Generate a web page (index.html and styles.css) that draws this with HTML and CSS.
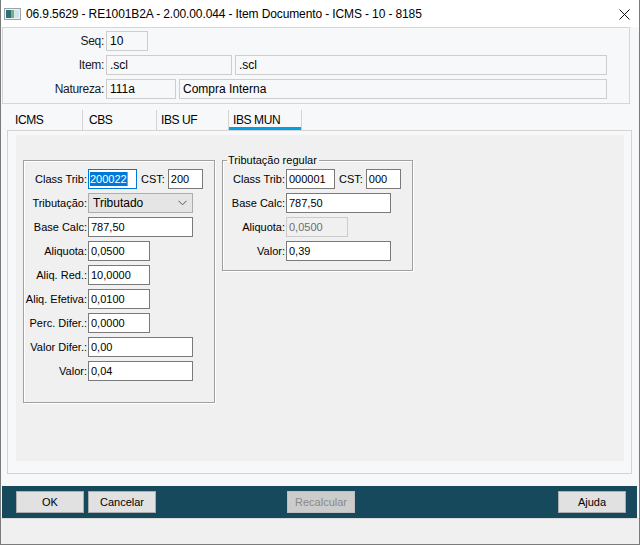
FILE: index.html
```html
<!DOCTYPE html>
<html lang="pt-BR">
<head>
    <meta charset="UTF-8">
    <meta name="viewport" content="width=device-width, initial-scale=1.0">
    <title>Item Documento - ICMS</title>
    <link rel="stylesheet" href="styles.css">
</head>
<body>
    <div class="window">
        <div class="titlebar">
            <svg class="app-icon" width="17" height="12" viewBox="0 0 17 12">
                <rect x="0.5" y="0.5" width="16" height="11" fill="#eef3f6" stroke="#9aa3a8"/>
                <rect x="2" y="2" width="5" height="8" fill="#2f6d7e"/>
                <rect x="7" y="2" width="3" height="8" fill="#6fb86a"/>
                <rect x="10" y="2" width="5" height="8" fill="#d3e3ee"/>
            </svg>
            <span class="title">06.9.5629 - RE1001B2A - 2.00.00.044 - Item Documento - ICMS - 10 - 8185</span>
            <svg class="close" width="11" height="11" viewBox="0 0 11 11">
                <path d="M0.5 0.5 L10.5 10.5 M10.5 0.5 L0.5 10.5" stroke="#111" stroke-width="1" fill="none"/>
            </svg>
        </div>

        <div class="header">
            <div class="hrow">
                <label>Seq:</label>
                <div class="hfields">
                    <div class="hinput w-seq">10</div>
                </div>
            </div>
            <div class="hrow">
                <label>Item:</label>
                <div class="hfields">
                    <div class="hinput w-item">.scl</div>
                    <div class="hinput w-item-desc">.scl</div>
                </div>
            </div>
            <div class="hrow">
                <label>Natureza:</label>
                <div class="hfields">
                    <div class="hinput w-nat">111a</div>
                    <div class="hinput w-nat-desc">Compra Interna</div>
                </div>
            </div>
        </div>

        <div class="tabs">
            <div class="tab t1">ICMS</div>
            <div class="tab t2">CBS</div>
            <div class="tab t3">IBS UF</div>
            <div class="tab t4 active">IBS MUN</div>
        </div>

        <div class="tab-panel">
            <div class="panel-inner">
                <fieldset class="group group-left">
                    <div class="frow">
                        <label>Class Trib:</label>
                        <div class="finput w-code focused"><span class="sel">200022</span><span class="caret"></span></div>
                        <span class="cst">CST:</span>
                        <div class="finput w-cst">200</div>
                    </div>
                    <div class="frow">
                        <label>Tributação:</label>
                        <div class="select w-long">
                            <span>Tributado</span>
                            <svg width="9" height="6" viewBox="0 0 9 6">
                                <path d="M0.5 0.8 L4.5 4.8 L8.5 0.8" stroke="#555" stroke-width="1" fill="none"/>
                            </svg>
                        </div>
                    </div>
                    <div class="frow">
                        <label>Base Calc:</label>
                        <div class="finput w-long">787,50</div>
                    </div>
                    <div class="frow">
                        <label>Aliquota:</label>
                        <div class="finput w-rate">0,0500</div>
                    </div>
                    <div class="frow">
                        <label>Aliq. Red.:</label>
                        <div class="finput w-rate">10,0000</div>
                    </div>
                    <div class="frow">
                        <label>Aliq. Efetiva:</label>
                        <div class="finput w-rate">0,0100</div>
                    </div>
                    <div class="frow">
                        <label>Perc. Difer.:</label>
                        <div class="finput w-rate">0,0000</div>
                    </div>
                    <div class="frow">
                        <label>Valor Difer.:</label>
                        <div class="finput w-long">0,00</div>
                    </div>
                    <div class="frow">
                        <label>Valor:</label>
                        <div class="finput w-long">0,04</div>
                    </div>
                </fieldset>

                <fieldset class="group group-right">
                    <legend>Tributação regular</legend>
                    <div class="frow">
                        <label>Class Trib:</label>
                        <div class="finput w-code">000001</div>
                        <span class="cst">CST:</span>
                        <div class="finput w-cst">000</div>
                    </div>
                    <div class="frow">
                        <label>Base Calc:</label>
                        <div class="finput w-long">787,50</div>
                    </div>
                    <div class="frow">
                        <label>Aliquota:</label>
                        <div class="finput w-rate disabled">0,0500</div>
                    </div>
                    <div class="frow">
                        <label>Valor:</label>
                        <div class="finput w-long">0,39</div>
                    </div>
                </fieldset>
            </div>
        </div>

        <div class="actions">
            <div class="actions-left">
                <button class="btn">OK</button>
                <button class="btn">Cancelar</button>
            </div>
            <button class="btn" disabled>Recalcular</button>
            <div class="actions-right">
                <button class="btn">Ajuda</button>
            </div>
        </div>
        <div class="footer"></div>
    </div>
</body>
</html>
```

FILE: styles.css
```css
body {
    margin: 0;
    background-color: #f0f0f0;
    font-family: "Liberation Sans", Arial, sans-serif;
    color: #000;
}
.window {
    width: 640px;
    height: 545px;
    box-sizing: border-box;
    border: 1px solid #7b7b7b;
    border-top: none;
    background-color: #f7f8fa;
    display: flex;
    flex-direction: column;
}

/* title bar */
.titlebar {
    height: 27px;
    background-color: #fff;
    display: flex;
    align-items: center;
}
.app-icon {
    margin-left: 3px;
    margin-top: 1px;
}
.title {
    margin-left: 5px;
    font-size: 12px;
    letter-spacing: -0.12px;
    color: #000;
    flex: 1;
}
.close {
    margin-right: 9px;
    margin-top: 1px;
}

/* header */
.header {
    margin-left: 1px;
    width: 628px;
    height: 77px;
    box-sizing: border-box;
    border: 1px solid #d6d6d6;
    padding-top: 3px;
    display: flex;
    flex-direction: column;
    gap: 4px;
}
.hrow {
    display: grid;
    grid-template-columns: 101px auto;
    column-gap: 2px;
    align-items: center;
}
.hrow label {
    text-align: right;
    font-size: 12px;
    letter-spacing: -0.3px;
    color: #1a1a1a;
}
.hfields {
    display: flex;
    gap: 3px;
}
.hinput {
    height: 20px;
    box-sizing: border-box;
    border: 1px solid #cdcdcd;
    background-color: #f7f8fa;
    font-size: 12px;
    line-height: 18px;
    padding-left: 3px;
}
.w-seq { width: 42px; }
.w-item { width: 126px; }
.w-item-desc { width: 372px; }
.w-nat { width: 70px; }
.w-nat-desc { width: 428px; }

/* tabs */
.tabs {
    height: 26px;
    display: flex;
    padding-left: 8px;
}
.tab {
    margin-top: 6px;
    height: 20px;
    box-sizing: border-box;
    border-right: 1px solid #d4d4d4;
    padding: 3px 0 0 6px;
    font-size: 12px;
    letter-spacing: -0.4px;
    line-height: 14px;
    color: #000;
}
.t1 { width: 74px; }
.t2 { width: 74px; }
.t3 { width: 72px; padding-left: 4px; }
.t4 { width: 73px; padding-left: 4px; }
.tab.active {
    box-shadow: inset 0 -3px 0 #00a0e3;
}

.tab-panel {
    margin-left: 6px;
    width: 625px;
    height: 344px;
    box-sizing: border-box;
    border: 1px solid #d4d4d4;
    padding: 4px 7px 12px 8px;
}
.panel-inner {
    height: 100%;
    background-color: #f0f0f0;
    padding: 25px 0 0 7px;
    box-sizing: border-box;
    display: flex;
    align-items: flex-start;
    gap: 7px;
}

/* group boxes */
.group {
    margin: 0;
    min-width: 0;
    box-sizing: border-box;
    border: 1px solid #a0a0a0;
    box-shadow: 1px 1px 0 #fff, inset 1px 1px 0 #fff;
    display: flex;
    flex-direction: column;
    gap: 4px;
}
.group-left {
    width: 192px;
    height: 243px;
    padding: 8px 0 0 0;
}
.group-right {
    width: 191px;
    margin-top: -8px;
    padding: 1px 0 9px 0;
}
.group legend {
    margin-left: 4px;
    padding: 0 2px 0 1px;
    font-size: 11px;
    line-height: 16px;
    color: #000;
}
.frow {
    display: flex;
    align-items: center;
    height: 20px;
}
.frow label {
    width: 63px;
    margin-right: 1px;
    text-align: right;
    font-size: 11px;
    color: #000;
    white-space: nowrap;
}
.group-right .frow label {
    width: 62px;
}
.finput {
    height: 20px;
    box-sizing: border-box;
    border: 1px solid #7a7a7a;
    background-color: #fff;
    font-size: 11px;
    line-height: 18px;
    padding-left: 2px;
    display: flex;
    align-items: center;
}
.finput.focused {
    border-color: #0078d7;
    padding-left: 1px;
}
.finput .sel {
    background-color: #0078d7;
    color: #fff;
    line-height: 14px;
}
.finput .caret {
    width: 1px;
    height: 14px;
    background-color: #e4893a;
}
.finput.disabled {
    background-color: #f0f0f0;
    border-color: #cccccc;
    color: #6d6d6d;
}
.cst {
    margin: 0 3px 0 4px;
    font-size: 11px;
}
.w-code { width: 49px; }
.w-cst { width: 35px; }
.w-long { width: 105px; }
.w-rate { width: 62px; }

.select {
    height: 20px;
    box-sizing: border-box;
    border: 1px solid #adadad;
    background-color: #e5e5e5;
    font-size: 12px;
    padding: 0 5px 0 4px;
    display: flex;
    align-items: center;
    justify-content: space-between;
}

/* bottom buttons */
.actions {
    margin: 12px 0 0 1px;
    width: 635px;
    height: 32px;
    box-sizing: border-box;
    background-color: #17495c;
    padding: 5px 11px 0 14px;
    display: grid;
    grid-template-columns: 1fr auto 1fr;
    align-items: start;
}
.actions-left {
    display: flex;
    gap: 4px;
}
.actions-right {
    display: flex;
    justify-content: flex-end;
}
.btn {
    width: 68px;
    height: 22px;
    box-sizing: border-box;
    border: 1px solid #adadad;
    background-color: #e1e1e1;
    font-family: "Liberation Sans", Arial, sans-serif;
    font-size: 11px;
    color: #000;
    padding: 0;
    cursor: pointer;
}
.btn:disabled {
    background-color: #cccccc;
    border-color: #bfbfbf;
    color: #8a8a8a;
    cursor: default;
}
.footer {
    flex: 1;
    background-color: #f0f0f0;
    border-top: 1px solid #dcdcdc;
}
```
